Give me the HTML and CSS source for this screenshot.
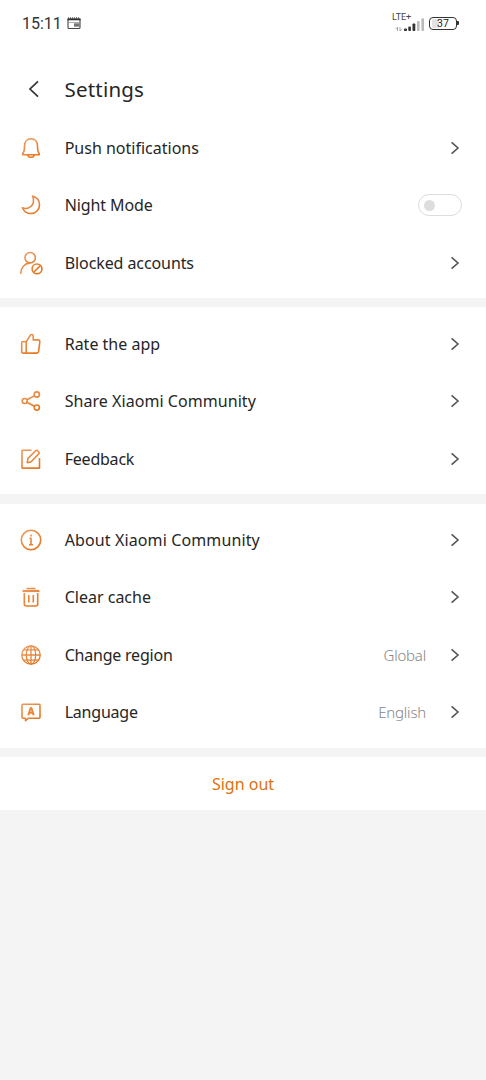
FILE: index.html
```html
<!DOCTYPE html>
<html lang="en">
<head>
<meta charset="utf-8">
<title>Settings</title>
<link rel="stylesheet" href="styles.css">
</head>
<body>
<svg class="defs" width="0" height="0" aria-hidden="true"><defs>
<linearGradient id="orange" gradientUnits="userSpaceOnUse" x1="4" y1="2" x2="19" y2="22"><stop offset="0" stop-color="#eb9a60"/><stop offset="1" stop-color="#e5741c"/></linearGradient>
<symbol id="chevron" viewBox="0 0 10 14"><path d="M1.600 1.300 8 7l-6.400 5.700"/></symbol>
</defs></svg>
<header class="top">
  <div class="status">
    <span class="clock">15:11</span>
    <svg class="news" viewBox="0 0 14 13"><path d="M1 2v8.500q0 1 1 1h10q1 0 1-1V2" fill="none" stroke="#444" stroke-width="1.100"/><path d="M.5 2.300h13" stroke="#333" stroke-width="2"/><path d="M1 .9h12" stroke="#333" stroke-width="1" stroke-dasharray="1 1"/><path d="M1.500 5.500h11" stroke="#888" stroke-width=".7"/><path d="M7 6.300h5.500v3.400H7z" fill="#777"/></svg>
    <div class="signal">
      <span class="lte">LTE+</span>
      <svg class="bars" viewBox="0 0 30 14"><g stroke="#999" stroke-width=".9" fill="none"><path d="M2.500 13V9.200L.8 11M5 9.200V13l1.700-1.800"/></g><g fill="#333"><rect x="9" y="10.500" width="3" height="2.500" rx=".8"/><rect x="13.300" y="8.600" width="2.600" height="4.400" rx=".8"/><rect x="17.500" y="5.500" width="2.800" height="7.500" rx=".8"/></g><g fill="#bbb"><rect x="22" y="3" width="2.600" height="10" rx=".8"/><rect x="26.400" y=".3" width="2.600" height="12.700" rx=".8"/></g></svg>
    </div>
    <div class="battery"><span>37</span></div>
  </div>
  <div class="titlebar">
    <svg class="back" viewBox="0 0 12 18"><path d="M10 1.300 2 9l8 7.700"/></svg>
    <h1>Settings</h1>
  </div>
</header>
<main>
<section class="group first">
  <div class="row"><svg class="icon" viewBox="0 0 24 24"><path d="M4 17.300c1.300-1.600 1.500-3.600 1.500-7.300 0-4.500 2.700-7.200 6.500-7.200s6.500 2.700 6.500 7.200c0 3.700.2 5.700 1.500 7.300.7.900.5 1.500-.5 1.500h-15c-1 0-1.200-.6-.5-1.500zM8.600 18.900c.6 1.700 1.800 2.400 3.400 2.400s2.800-.7 3.400-2.400"/></svg><span class="label">Push notifications</span><svg class="arrow"><use href="#chevron"/></svg></div>
  <div class="row"><svg class="icon" viewBox="0 0 24 24"><path d="M13.500 3c4.300 1.200 7 4.700 7 8.900 0 4.900-3.800 8.600-8.500 8.600-3.800 0-7.100-2.100-8.600-5.800 2 .9 4.600 1 6.800-.1 4.300-2.100 5.700-6.900 3.300-11.600z"/></svg><span class="label snug">Night Mode</span><span class="switch"></span></div>
  <div class="row"><svg class="icon" viewBox="0 0 24 24"><circle cx="11.200" cy="6.700" r="5.200"/><path d="M1.700 22.800c.2-6.200 3.900-10.400 9.400-10.900"/><circle cx="18" cy="17.900" r="4.900"/><path d="m14.700 21.200 6.600-6.600"/></svg><span class="label snug">Blocked accounts</span><svg class="arrow"><use href="#chevron"/></svg></div>
</section>
<section class="group">
  <div class="row"><svg class="icon" viewBox="0 0 24 24"><path d="M7.200 9.700H3.300q-.6 0-.6.700v9q0 1.700 1.700 1.700h13.200q1.700 0 2-1.700l1.200-9.500q.2-2-1.800-2h-4.800V4.300c0-1.500-.9-2.100-2.500-1.500L7.200 9.700z"/><path d="M7.200 9.700v11.300"/></svg><span class="label">Rate the app</span><svg class="arrow"><use href="#chevron"/></svg></div>
  <div class="row"><svg class="icon" viewBox="0 0 24 24"><circle cx="5.700" cy="12" r="2.500"/><circle cx="17.800" cy="5.500" r="2.600"/><circle cx="17.800" cy="18.600" r="2.600"/><path d="m8 10.800 7.300-3.900M8 13.200l7.300 4.100"/></svg><span class="label wide">Share Xiaomi Community</span><svg class="arrow"><use href="#chevron"/></svg></div>
  <div class="row"><svg class="icon" viewBox="0 0 24 24"><path d="M12.500 3.200H3v17.900h17.500V11"/><path d="m8.300 15.700.5-4.100 7.900-7.900q.9-.9 1.900.1l1.200 1.200q.9.900 0 1.800l-7.900 8.200z"/></svg><span class="label tight">Feedback</span><svg class="arrow"><use href="#chevron"/></svg></div>
</section>
<section class="group">
  <div class="row"><svg class="icon" viewBox="0 0 24 24"><circle cx="12" cy="12" r="9.700"/><path d="M10.500 10.200H12v6.500M10 16.700h4M12 6.600v2"/></svg><span class="label wider">About Xiaomi Community</span><svg class="arrow"><use href="#chevron"/></svg></div>
  <div class="row"><svg class="icon" viewBox="0 0 24 24"><path d="M5.300 8V19q0 2 2 2h9.400q2 0 2-2V8M9.800 10v7.500M14.300 10v7.500M7.500 3.500h9"/><path class="thick" d="M3.500 6h17"/></svg><span class="label">Clear cache</span><svg class="arrow"><use href="#chevron"/></svg></div>
  <div class="row"><svg class="icon fine" viewBox="0 0 24 24"><circle cx="12" cy="12" r="9.200"/><ellipse cx="12" cy="12" rx="4.700" ry="9.200"/><path d="M12 2.800v18.400M2.800 12h18.400M4.500 6.800h15M4.500 17.200h15"/></svg><span class="label tight">Change region</span><span class="value">Global</span><svg class="arrow"><use href="#chevron"/></svg></div>
  <div class="row"><svg class="icon" viewBox="0 0 24 24"><path d="M4 4.300h16q1 0 1 1v12q0 1-1 1H9.300l-2.800 2.400v-2.400H4q-1 0-1-1v-12q0-1 1-1z"/><path class="letter" d="M9.300 15.200 11.600 8h.8l2.300 7.200M10.300 12.800h3.400"/></svg><span class="label tight">Language</span><span class="value">English</span><svg class="arrow"><use href="#chevron"/></svg></div>
</section>
<button class="signout">Sign out</button>
</main>
</body>
</html>
```
FILE: styles.css
```css
* { box-sizing: border-box; }
body { margin: 0; min-height: 1080px; background: #f4f4f4; color: #262626; font-family: "Noto Sans", sans-serif; }
.defs { position: absolute; }
.top { height: 119px; background: #fff; }
.status { height: 46px; display: flex; align-items: center; padding: 0 27px 0 22px; }
.clock { font: 16px/20px Roboto, sans-serif; color: #333; padding-top: 1px; }
.news { width: 14px; height: 13px; margin-left: 5px; }
.signal { width: 33px; height: 18px; margin-left: auto; display: grid; }
.signal > * { grid-area: 1 / 1; }
.lte { font: 9px/9px Roboto, sans-serif; color: #444; margin-top: -1px; }
.bars { width: 30px; height: 14px; align-self: end; justify-self: end; }
.battery { display: flex; align-items: center; margin-left: 4px; }
.battery span { width: 28px; height: 13px; border: 1.500px solid #333; border-radius: 4px; font: 10.500px/11px Roboto, sans-serif; text-align: center; color: #222; background: linear-gradient(90deg, #e2e2e2 33%, #fff 33%) content-box; padding: 1px 2px; line-height: 9.500px; }
.battery::after { content: ""; width: 2px; height: 4px; background: #333; border-radius: 0 1px 1px 0; }
.titlebar { height: 86px; display: flex; align-items: center; padding-left: 28px; }
.back { width: 12px; height: 18px; fill: none; stroke: #333; stroke-width: 1.700; }
h1 { margin: 0 0 0 24.500px; font-size: 20.500px; line-height: 28px; font-weight: 400; letter-spacing: .2px; }
.group { background: #fff; padding: 7.600px 0 7px; margin-bottom: 9.300px; }
.first { padding-top: .3px; padding-bottom: 6.700px; }
.row { height: 57.400px; display: flex; align-items: center; padding: 0 24px 0 19px; }
.icon { width: 24px; height: 24px; flex: none; fill: none; stroke: url(#orange); stroke-width: 1.600; stroke-linejoin: round; }
.fine { stroke-width: 1.300; }
.thick { stroke-width: 2.200; }
.letter { stroke-width: 2; }
.label { margin-left: 21.700px; margin-right: auto; font-size: 16px; line-height: 24px; white-space: nowrap; }
.snug { letter-spacing: -.09px; }
.tight { letter-spacing: -.22px; }
.wide { letter-spacing: .05px; }
.wider { letter-spacing: .12px; }
.value { color: #858585; font-size: 15px; font-weight: 300; letter-spacing: -.2px; margin-right: 24px; }
.arrow { width: 10px; height: 14px; margin-right: 2px; fill: none; stroke: #555; stroke-width: 1.600; }
.switch { width: 44px; height: 22px; padding: 0 5px; display: flex; align-items: center; border: 1px solid #ddd; border-radius: 11px; }
.switch::before { content: ""; width: 11px; height: 11px; border-radius: 50%; background: #ddd; }
.signout { display: block; width: 100%; height: 53.500px; border: 0; padding: 0; background: #fff; color: #e0700f; font: 16px/24px "Noto Sans", sans-serif; }
```
